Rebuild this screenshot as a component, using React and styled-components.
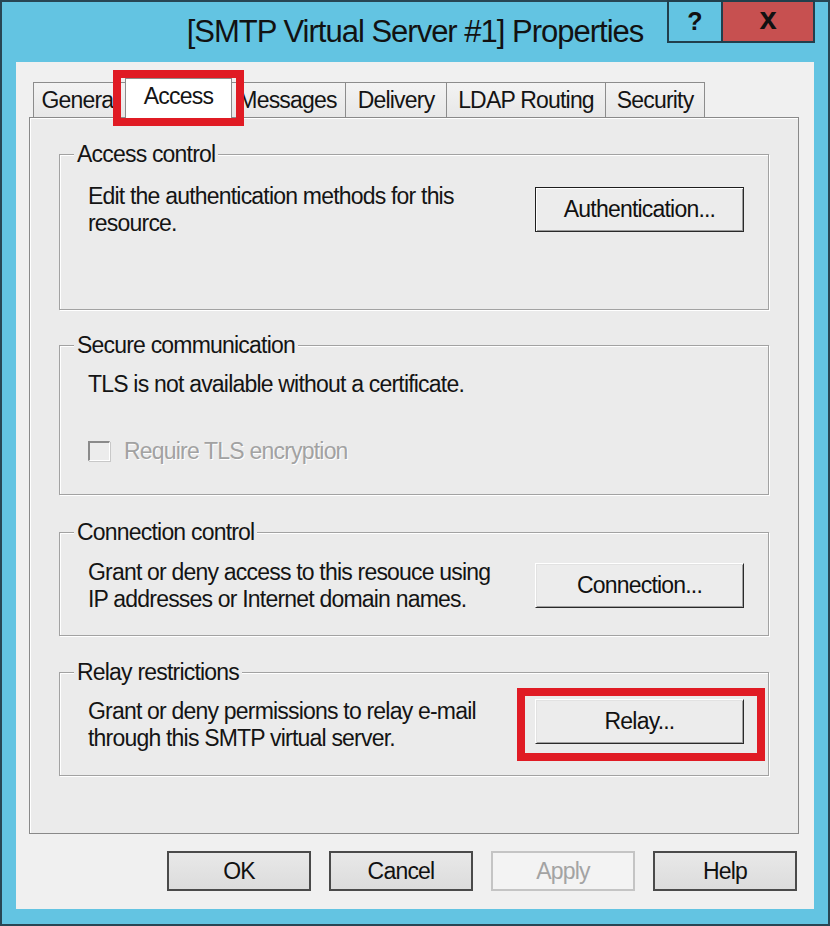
import React from "react";
import styled, { createGlobalStyle } from "styled-components";

const GlobalStyle = createGlobalStyle`
    html, body {
        margin: 0;
        padding: 0;
        background: #63c4e2;
    }
    body {
        font-family: "Liberation Sans", Arial, sans-serif;
        color: #141414;
    }
`;

const Window = styled.div`
    width: 830px;
    height: 926px;
    box-sizing: border-box;
    border: 2px solid #284654;
    background: #63c4e2;
    display: flex;
    flex-direction: column;
`;

const TitleBar = styled.div`
    height: 60px;
    flex: none;
    display: grid;
    grid-template-columns: 1fr auto 1fr;
    align-items: start;
`;

const Title = styled.h1`
    grid-column: 2;
    margin: 0;
    padding-top: 13px;
    font-size: 31px;
    line-height: 34px;
    letter-spacing: -1px;
    font-weight: normal;
    color: #121212;
    white-space: nowrap;
`;

const CaptionButtons = styled.div`
    grid-column: 3;
    justify-self: end;
    display: flex;
    margin-top: -2px;
    margin-right: 13px;
`;

const CaptionButton = styled.button`
    width: ${({ $w }) => $w}px;
    height: 43px;
    box-sizing: border-box;
    border: 2px solid #213f4c;
    margin-left: ${({ $close }) => ($close ? "-2px" : "0")};
    padding: 0 0 ${({ $close }) => ($close ? "6px" : "0")};
    background: ${({ $close }) => ($close ? "#c75050" : "#63c4e2")};
    color: #111;
    font-family: "Liberation Sans", Arial, sans-serif;
    font-weight: bold;
    font-size: ${({ $close }) => ($close ? "31px" : "25px")};
    line-height: 1;
    display: flex;
    align-items: center;
    justify-content: center;
`;

const Client = styled.div`
    flex: 1;
    margin: 0 14px 15px;
    background: #f0f0f0;
    padding: 18px 15px 18px 13px;
    display: flex;
    flex-direction: column;
    font-size: 23px;
    letter-spacing: -0.8px;
`;

const TabStrip = styled.div`
    height: 38px;
    flex: none;
    display: flex;
    align-items: flex-end;
    padding-left: 4px;
    margin-bottom: -1px;
    position: relative;
    z-index: 1;
`;

const Tab = styled.div`
    position: relative;
    box-sizing: border-box;
    width: ${({ $w }) => $w}px;
    height: ${({ $active }) => ($active ? "40px" : "35px")};
    margin: ${({ $active }) => ($active ? "0 -2px 0" : "0 0 1px")};
    margin-left: ${({ $first }) => ($first ? "0" : "-1px")};
    padding-bottom: ${({ $active }) => ($active ? "5px" : "0")};
    border: 1px solid #8c8c8c;
    border-bottom: none;
    background: ${({ $active }) => ($active ? "#ffffff" : "linear-gradient(#f3f3f3, #e7e7e7)")};
    z-index: ${({ $active }) => ($active ? 2 : 1)};
    text-align: center;
    line-height: 35px;
    white-space: nowrap;
    overflow: hidden;
`;

const TabMark = styled.span`
    position: absolute;
    top: 70px;
    left: 113px;
    width: 131px;
    height: 56px;
    box-sizing: border-box;
    border: 8px solid #e01b24;
    z-index: 3;
    pointer-events: none;
`;

const Panel = styled.div`
    flex: 1;
    border: 1px solid #898989;
    box-shadow: inset 1px 1px 0 #ffffff;
    background: #ebebeb;
    padding: 0 29px;
    display: flex;
    flex-direction: column;
`;

const GroupBox = styled.div`
    box-sizing: border-box;
    height: ${({ $h }) => $h}px;
    margin-top: ${({ $top }) => $top}px;
    border: 1px solid #a2a2a2;
    box-shadow: inset 1px 1px 0 #ffffff, 1px 1px 0 #ffffff;
    padding: 0 24px 0 28px;
`;

const Legend = styled.div`
    width: fit-content;
    margin: -16px 0 0 -14px;
    padding: 0 3px;
    line-height: 31px;
    background: #ebebeb;
    white-space: nowrap;
`;

const GroupRow = styled.div`
    display: flex;
    justify-content: space-between;
    align-items: flex-start;
    margin-top: ${({ $top }) => $top ?? 11}px;
`;

const Description = styled.p`
    margin: 0;
    line-height: 26.5px;
    white-space: nowrap;
`;

const ButtonSlot = styled.div`
    position: relative;
    margin-top: ${({ $top }) => $top}px;
`;

const ActionButton = styled.button`
    width: 209px;
    height: 45px;
    box-sizing: border-box;
    font: inherit;
    letter-spacing: inherit;
    color: #111;
    background: #ececec;
    padding: 0;
    border: 1px solid ${({ $default }) => ($default ? "#1e1e1e" : "#ffffff")};
    border-right-color: #2a2a2a;
    border-bottom-color: #2a2a2a;
    box-shadow: ${({ $default }) =>
        $default
            ? "inset 1px 1px 0 #ffffff, inset -1px -1px 0 #9a9a9a"
            : "inset 1px 1px 0 #e2e2e2, inset -1px -1px 0 #a0a0a0"};
`;

const RelayMark = styled.span`
    position: absolute;
    top: -11px;
    left: -18px;
    right: -21px;
    bottom: -17px;
    border: 8px solid #e01b24;
    pointer-events: none;
`;

const CheckRow = styled.div`
    display: flex;
    align-items: center;
    margin-top: 40px;
`;

const CheckBox = styled.span`
    width: 22px;
    height: 20px;
    box-sizing: border-box;
    border: 1px solid #ffffff;
    border-top: 2px solid #8a8a8a;
    border-left: 2px solid #8a8a8a;
    background: #ececec;
    box-shadow: 1px 1px 0 #c8c8c8;
`;

const CheckLabel = styled.span`
    margin-left: 14px;
    line-height: 26.5px;
    color: #a2a2a2;
    text-shadow: 1px 1px 0 #ffffff;
`;

const ButtonRow = styled.div`
    flex: none;
    display: flex;
    justify-content: flex-end;
    gap: 18px;
    margin-top: 17px;
    padding-right: 2px;
`;

const DialogButton = styled.button`
    width: 144px;
    height: 40px;
    box-sizing: border-box;
    font: inherit;
    letter-spacing: inherit;
    padding: 0;
    border: 2px solid ${({ disabled }) => (disabled ? "#c4c4c4" : "#4a4a4a")};
    background: ${({ disabled }) => (disabled ? "#f3f3f3" : "linear-gradient(#e8e8e8, #dcdcdc)")};
    color: ${({ disabled }) => (disabled ? "#a3a3a3" : "#111")};
`;

const tabs = [
    { label: "General", w: 93 },
    { label: "Access", w: 107, active: true },
    { label: "Messages", w: 117 },
    { label: "Delivery", w: 102 },
    { label: "LDAP Routing", w: 160 },
    { label: "Security", w: 100 },
];

export default function App() {
    return (
        <>
            <GlobalStyle />
            <Window>
                <TitleBar>
                    <Title>[SMTP Virtual Server #1] Properties</Title>
                    <CaptionButtons>
                        <CaptionButton $w={56}>?</CaptionButton>
                        <CaptionButton $w={94} $close>
                            x
                        </CaptionButton>
                    </CaptionButtons>
                </TitleBar>
                <Client>
                    <TabStrip>
                        {tabs.map((t, i) => (
                            <Tab key={t.label} $w={t.w} $active={t.active} $first={i === 0}>
                                {t.label}
                            </Tab>
                        ))}
                    </TabStrip>
                    <Panel>
                        <GroupBox $top={36} $h={156}>
                            <Legend>Access control</Legend>
                            <GroupRow $top={13}>
                                <Description>
                                    Edit the authentication methods for this
                                    <br />
                                    resource.
                                </Description>
                                <ButtonSlot $top={4}>
                                    <ActionButton $default>Authentication...</ActionButton>
                                </ButtonSlot>
                            </GroupRow>
                        </GroupBox>

                        <GroupBox $top={35} $h={150}>
                            <Legend>Secure communication</Legend>
                            <GroupRow $top={10}>
                                <Description>TLS is not available without a certificate.</Description>
                            </GroupRow>
                            <CheckRow>
                                <CheckBox />
                                <CheckLabel>Require TLS encryption</CheckLabel>
                            </CheckRow>
                        </GroupBox>

                        <GroupBox $top={37} $h={104}>
                            <Legend>Connection control</Legend>
                            <GroupRow $top={11}>
                                <Description>
                                    Grant or deny access to this resouce using
                                    <br />
                                    IP addresses or Internet domain names.
                                </Description>
                                <ButtonSlot $top={4}>
                                    <ActionButton>Connection...</ActionButton>
                                </ButtonSlot>
                            </GroupRow>
                        </GroupBox>

                        <GroupBox $top={36} $h={104}>
                            <Legend>Relay restrictions</Legend>
                            <GroupRow $top={10}>
                                <Description>
                                    Grant or deny permissions to relay e-mail
                                    <br />
                                    through this SMTP virtual server.
                                </Description>
                                <ButtonSlot $top={1}>
                                    <ActionButton>Relay...</ActionButton>
                                    <RelayMark />
                                </ButtonSlot>
                            </GroupRow>
                        </GroupBox>
                    </Panel>
                    <ButtonRow>
                        <DialogButton>OK</DialogButton>
                        <DialogButton>Cancel</DialogButton>
                        <DialogButton disabled>Apply</DialogButton>
                        <DialogButton>Help</DialogButton>
                    </ButtonRow>
                </Client>
                <TabMark />
            </Window>
        </>
    );
}
